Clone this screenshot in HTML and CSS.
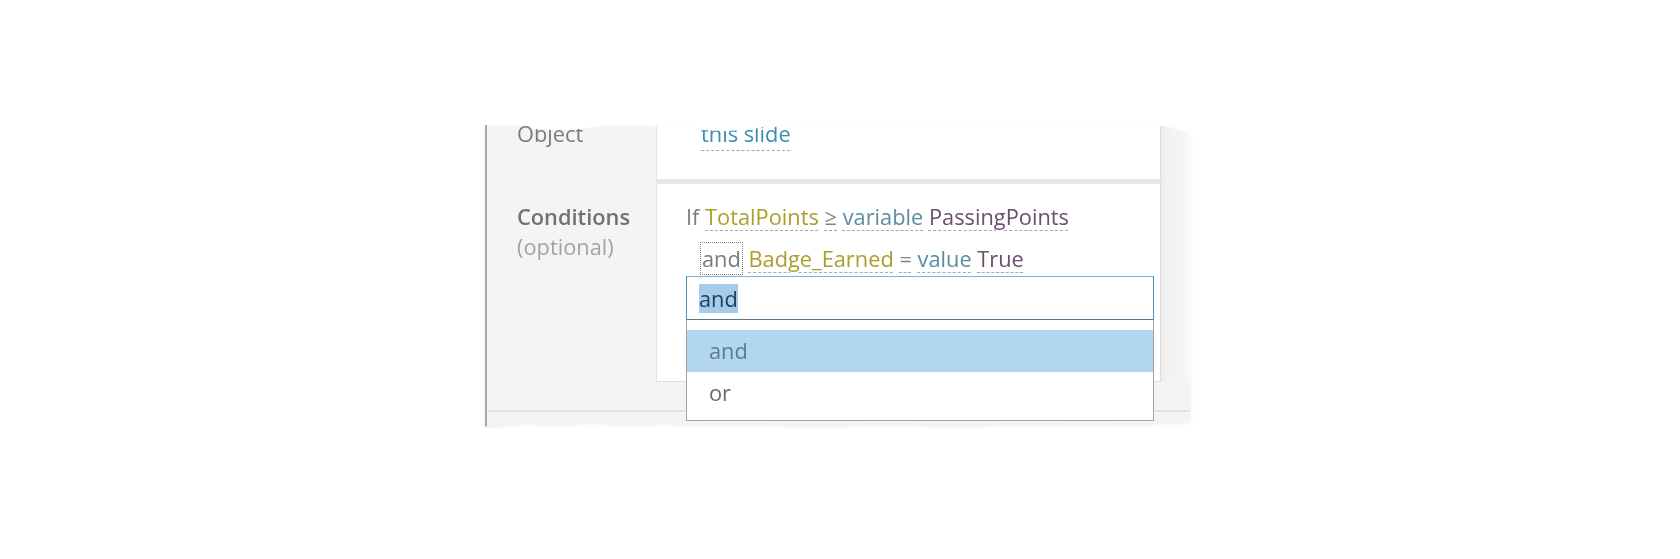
FILE: index.html
```html
<!DOCTYPE html>
<html lang="en">
<head>
<meta charset="utf-8">
<title>Trigger conditions</title>
<link rel="stylesheet" href="styles.css">
</head>
<body>
<div class="page">
  <div class="shadow">
    <div class="panel">
      <div class="row row-object">
        <div class="label"><div class="lbl-muted">Object</div></div>
        <div class="card card-object"><span class="link">this slide</span></div>
        <div class="gutter"></div>
      </div>
      <div class="row row-cond">
        <div class="label">
          <div class="lbl-strong">Conditions</div>
          <div class="lbl-sub">(optional)</div>
        </div>
        <div class="card card-cond">
          <div class="line">If <span class="tok t-var">TotalPoints</span> <span class="tok t-op">≥</span> <span class="tok t-kind">variable</span> <span class="tok t-val">PassingPoints</span></div>
          <div class="line line2"><span class="focus">and</span> <span class="tok t-var">Badge_Earned</span> <span class="tok t-op">=</span> <span class="tok t-kind">value</span> <span class="tok t-val">True</span></div>
          <div class="combo">
            <div class="combo-input"><span class="sel">and</span></div>
            <ul class="combo-list">
              <li class="opt opt-active">and</li>
              <li class="opt">or</li>
            </ul>
          </div>
        </div>
        <div class="gutter"></div>
      </div>
      <div class="bottom-space"></div>
      <div class="bottom-rule"></div>
    </div>
  </div>
</div>
</body>
</html>
```
FILE: styles.css
```css
html, body {
  margin: 0;
  background: #ffffff;
}
body {
  font-family: "Open Sans", "Noto Sans", sans-serif;
  font-size: 21.8px;
  color: #7a7a7a;
}
.page {
  padding: 125px 0 0 485px;
}
.shadow {
  width: 705px;
  filter: drop-shadow(0 2px 2px rgba(0, 0, 0, 0.07));
}
.panel {
  width: 705px;
  height: 304px;
  box-sizing: border-box;
  border-left: 2px solid #a9a9a9;
  background: #f4f4f4;
  overflow: hidden;
  display: flex;
  flex-direction: column;
  clip-path: polygon(
    0 0, 46px 1px, 48px 4px, 70px 5px, 95px 4px, 120px 1px, 210px 2px,
    213px 5px, 240px 6px, 262px 5px, 280px 2px, 420px 1px, 560px 2px,
    680px 1px, 690px 4px, 705px 9px,
    705px 294px, 695px 297px, 675px 296px, 668px 298px, 600px 299px,
    540px 298px, 470px 300px, 400px 298px, 330px 300px, 260px 298px,
    200px 299px, 180px 297px, 140px 299px, 110px 296px, 70px 299px,
    40px 297px, 10px 300px, 2px 301px, 0 302px
  );
}
.row {
  display: flex;
  flex: none;
}
.label {
  width: 169px;
  flex: none;
  padding-left: 30px;
  box-sizing: border-box;
}
.gutter {
  width: 29px;
  flex: none;
  background: linear-gradient(to right, #ededed 0, #f2f2f2 6px, #f5f5f5 22px, #f9f9f9 29px);
}
.card {
  width: 505px;
  flex: none;
  box-sizing: border-box;
  background: #ffffff;
  border-left: 1px solid #e3e3e3;
  border-right: 1px solid #dcdcdc;
}

/* Object row (top cut off by the tear) */
.row-object {
  margin-top: -20px;
  height: 74px;
}
.row-object .label,
.card-object {
  padding-top: 14px;
  line-height: 30px;
}
.lbl-muted {
  color: #7b7b7b;
}
.card-object {
  padding-left: 44px;
}
.link {
  color: #3b8db2;
  text-decoration: underline dashed #a8a8a8;
  text-decoration-thickness: 1px;
  text-underline-offset: 8px;
}

/* Conditions row */
.row-cond {
  height: 203px;
}
.row-cond .label {
  padding-top: 23px;
  line-height: 30px;
}
.lbl-strong {
  font-weight: 600;
  color: #6e7275;
}
.lbl-sub {
  color: #a3a3a3;
}
.card-cond {
  position: relative;
  height: 203px;
  border-top: 5px solid #e7e7e7;
  border-bottom: 1px solid #dedede;
  padding: 12px 0 0 29px;
  line-height: 42px;
  color: #7d7d7d;
}
.line {
  white-space: nowrap;
}
.line2 {
  padding-left: 14px;
}
.tok {
  text-decoration: underline dashed #a9a9a9;
  text-decoration-thickness: 1px;
  text-underline-offset: 5px;
}
.t-var { color: #ad9d2c; }
.t-op { color: #858585; }
.t-kind { color: #5b8d9e; }
.t-val { color: #6c4f6e; }
.focus {
  display: inline-block;
  line-height: 31px;
  padding: 0 1px;
  border: 1px dotted #7a7a7a;
  color: #7b7b7b;
}

/* Combo box dropdown (overlays the card) */
.combo {
  position: absolute;
  left: 29px;
  top: 92px;
  width: 468px;
  z-index: 2;
}
.combo-input {
  height: 44px;
  box-sizing: border-box;
  border: 1px solid;
  border-color: #7db4db #5d8fb3 #56768c #5d8fb3;
  background: #ffffff;
  padding: 2px 0 0 12px;
  line-height: 40px;
}
.sel {
  background: #a7cbe9;
  color: #1b3d5e;
}
.combo-list {
  list-style: none;
  margin: 0;
  padding: 10px 0 0 0;
  background: #ffffff;
  border: 1px solid #a3a3a3;
  border-top: none;
}
.opt {
  height: 48px;
  line-height: 42px;
  padding-left: 22px;
  color: #6a6a6a;
}
.opt-active {
  height: 42px;
  background: #b3d6f0;
  color: #5b7b90;
}

.bottom-space {
  height: 28px;
  flex: none;
}
.bottom-rule {
  height: 2px;
  flex: none;
  background: #e4e4e4;
}
```
